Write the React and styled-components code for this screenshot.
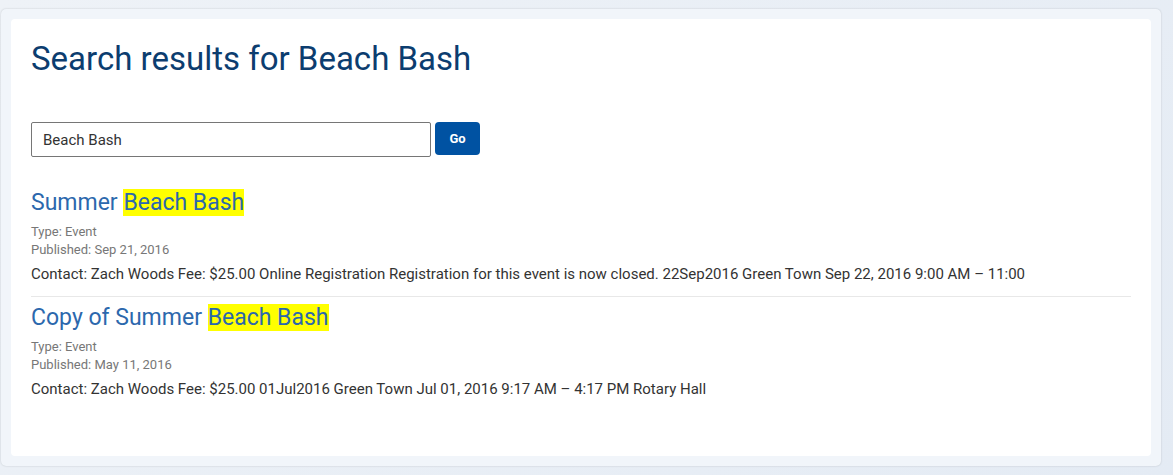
import React from 'react'
import styled, { createGlobalStyle } from 'styled-components'

const GlobalStyle = createGlobalStyle`
    html, body {
        margin:0;
        padding:0;
        height:100%;
    }
    body {
        background:linear-gradient(135deg, #eef2f7 0%, #e4ebf4 100%);
        font-family:Roboto, "Liberation Sans", Arial, sans-serif;
    }
`

const results = [
    {
        id: 1,
        prefix: 'Summer ',
        type: 'Event',
        published: 'Sep 21, 2016',
        summary: 'Contact: Zach Woods Fee: $25.00 Online Registration Registration for this event is now closed. 22Sep2016 Green Town Sep 22, 2016 9:00 AM – 11:00',
    },
    {
        id: 2,
        prefix: 'Copy of Summer ',
        type: 'Event',
        published: 'May 11, 2016',
        summary: 'Contact: Zach Woods Fee: $25.00 01Jul2016 Green Town Jul 01, 2016 9:17 AM – 4:17 PM Rotary Hall',
    },
]

const App = () => {
    return (
        <Page>
            <GlobalStyle />
            <Panel>
                <Card>
                    <Title>Search results for Beach Bash</Title>
                    <SearchForm onSubmit={(e) => e.preventDefault()}>
                        <SearchInput defaultValue="Beach Bash" />
                        <GoButton type="submit">Go</GoButton>
                    </SearchForm>
                    <ResultList>
                        {results.map((r) => (
                            <Result key={r.id}>
                                <ResultLink href="#">
                                    {r.prefix}<Mark>Beach Bash</Mark>
                                </ResultLink>
                                <Meta>Type: {r.type}</Meta>
                                <Meta>Published: {r.published}</Meta>
                                <Summary>{r.summary}</Summary>
                            </Result>
                        ))}
                    </ResultList>
                </Card>
            </Panel>
        </Page>
    )
}

export default App

const Page = styled.div`
    padding:9px 12px 9px 1px;
`

const Panel = styled.div`
    background-color:#f1f5fa;
    border-radius:5px;
    box-shadow:0 0 2px rgba(0,0,0,0.18);
    padding:10px;
`

const Card = styled.div`
    background-color:#fff;
    border-radius:4px;
    padding:20px 20px 0 20px;
    min-height:437px;
    box-sizing:border-box;
`

const Title = styled.h1`
    margin:0;
    font-size:33px;
    font-weight:400;
    line-height:40px;
    color:#0c3d6f;
`

const SearchForm = styled.form`
    display:flex;
    align-items:flex-start;
    gap:4px;
    margin-top:43px;
`

const SearchInput = styled.input`
    width:400px;
    height:35px;
    box-sizing:border-box;
    border:1px solid #767676;
    border-radius:2px;
    padding:0 11px;
    font-family:Roboto, "Liberation Sans", Arial, sans-serif;
    font-size:15px;
    color:#333;
    outline:none;
`

const GoButton = styled.button`
    width:45px;
    height:33px;
    border:none;
    border-radius:4px;
    background-color:#0052a2;
    color:#fff;
    font-family:Roboto, "Liberation Sans", Arial, sans-serif;
    font-size:13px;
    font-weight:700;
    cursor:pointer;
`

const ResultList = styled.div`
    margin-top:32px;
`

const Result = styled.div`
    padding-bottom:11px;
    margin-bottom:7px;
    border-bottom:1px solid #e8e8e8;
    &:last-child{
        border-bottom:none;
    }
`

const ResultLink = styled.a`
    display:block;
    font-size:23px;
    line-height:28px;
    color:#2c68ad;
    text-decoration:none;
    margin-bottom:6px;
`

const Mark = styled.mark`
    background-color:#ffff00;
    color:inherit;
`

const Meta = styled.div`
    font-size:13px;
    line-height:18px;
    color:#777;
`

const Summary = styled.div`
    margin-top:4px;
    font-size:15px;
    line-height:22px;
    color:#333;
`
